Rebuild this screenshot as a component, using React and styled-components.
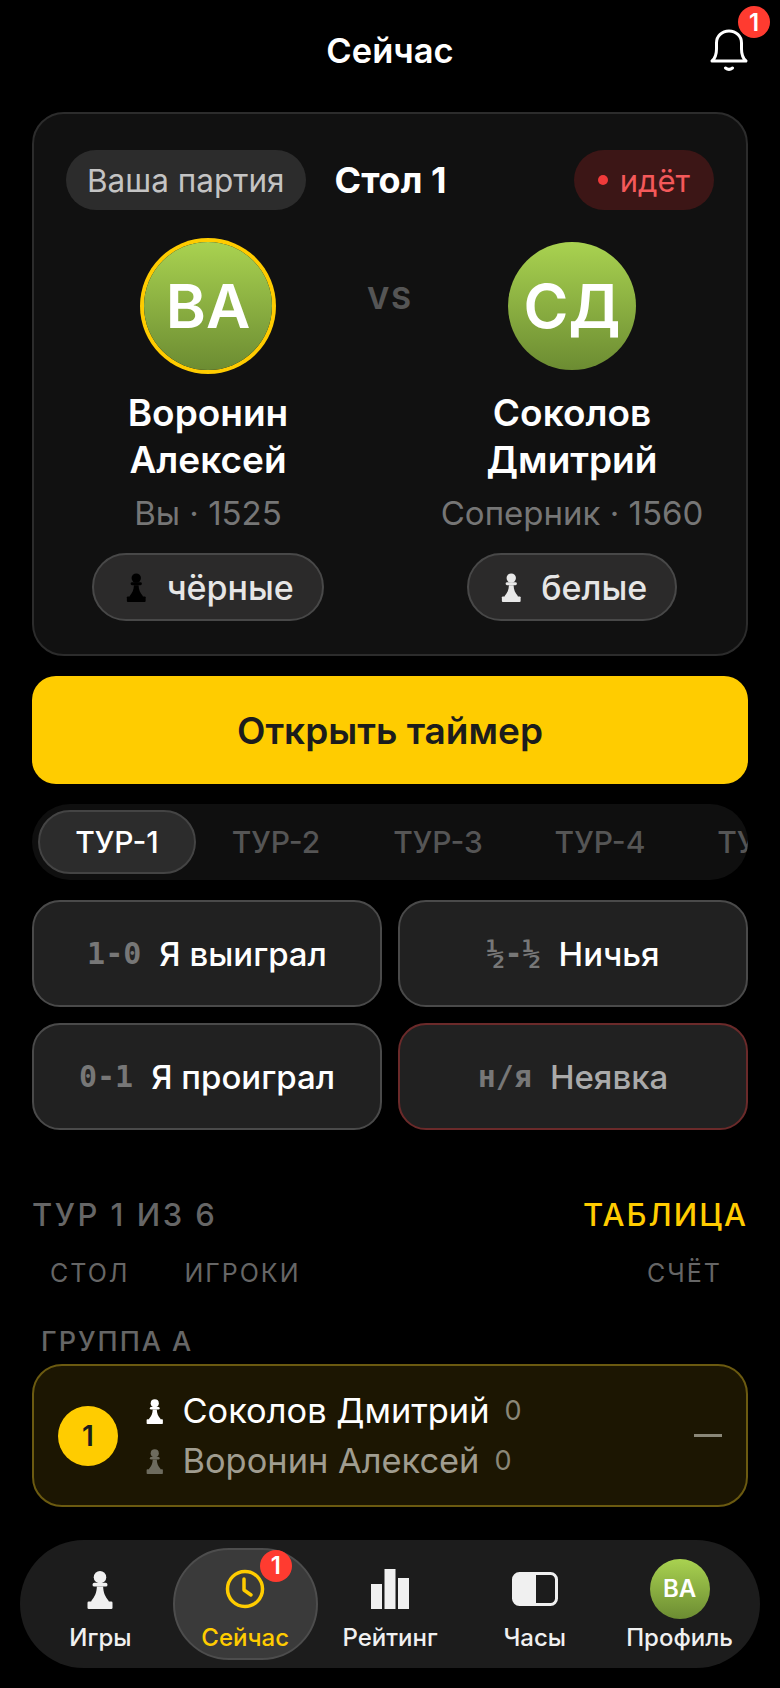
import styled, { createGlobalStyle } from 'styled-components'

const GlobalStyle = createGlobalStyle`
    html, body {
        margin: 0;
        padding: 0;
        background: #000;
    }
    * {
        box-sizing: border-box;
    }
`

const S = {}

S.Page = styled.div`
    width: 780px;
    height: 1688px;
    background: #000;
    color: #fff;
    font-family: Inter, "Noto Sans", sans-serif;
    display: flex;
    flex-direction: column;
    overflow: hidden;
`
S.Header = styled.header`
    height: 112px;
    flex: none;
    position: relative;
    display: flex;
    justify-content: center;
    padding-top: 29px;
`
S.Title = styled.h1`
    margin: 0;
    font-size: 34.5px;
    line-height: 44px;
    font-weight: 600;
`
S.Bell = styled.div`
    position: absolute;
    left: 708px;
    top: 28px;
    width: 42px;
    height: 44px;
`
S.Badge = styled.span`
    position: absolute;
    width: ${p => p.$size}px;
    height: ${p => p.$size}px;
    left: ${p => p.$left}px;
    top: ${p => p.$top}px;
    border-radius: 50%;
    background: #ff3b30;
    color: #fff;
    font-size: ${p => p.$font}px;
    font-weight: 600;
    display: flex;
    align-items: center;
    justify-content: center;
`
S.Main = styled.main`
    padding: 0 32px;
    display: flex;
    flex-direction: column;
`
S.Card = styled.section`
    height: 544px;
    background: #111;
    border: 2px solid #2c2c2c;
    border-radius: 32px;
    padding: 36px 32px 0;
`
S.CardTop = styled.div`
    display: flex;
    align-items: center;
    gap: 29px;
`
S.Tag = styled.span`
    height: 60px;
    border-radius: 30px;
    background: #2c2c2c;
    color: #c4c4c4;
    font-size: 31.5px;
    display: flex;
    align-items: center;
    padding: 0 21px;
`
S.TableName = styled.span`
    font-size: 36px;
    font-weight: 700;
    margin-right: auto;
`
S.Status = styled.span`
    height: 60px;
    border-radius: 30px;
    background: #3c1616;
    color: #f4595a;
    font-size: 31px;
    display: flex;
    align-items: center;
    gap: 12px;
    padding: 0 24px;
`
S.Dot = styled.i`
    width: 10px;
    height: 10px;
    border-radius: 50%;
    background: #f03a3a;
`
S.Players = styled.div`
    display: grid;
    grid-template-columns: 1fr 64px 1fr;
    margin: 28px -8px 0;
`
S.Player = styled.div`
    display: flex;
    flex-direction: column;
    align-items: center;
`
S.Avatar = styled.div`
    width: 128px;
    height: 128px;
    border-radius: 50%;
    background: linear-gradient(180deg, #a9d250 0%, #6c8c32 100%);
    display: flex;
    align-items: center;
    justify-content: center;
    font-size: 61px;
    font-weight: 600;
    margin-top: 4px;
    box-shadow: ${p => (p.$me ? '0 0 0 4px #ffcc00' : 'none')};
`
S.Name = styled.div`
    margin-top: 19px;
    font-size: 37px;
    line-height: 47px;
    font-weight: 600;
    text-align: center;
`
S.Meta = styled.div`
    margin-top: 8px;
    font-size: 33px;
    line-height: 44px;
    color: #767676;
    white-space: nowrap;
`
S.Chip = styled.div`
    margin-top: 18px;
    height: 68px;
    border-radius: 34px;
    border: 2px solid #484848;
    background: #2b2a2a;
    color: #e6e6e6;
    font-size: 34px;
    font-weight: 500;
    display: flex;
    align-items: center;
    gap: 19px;
    padding: 0 28px 0 31px;
`
S.Versus = styled.div`
    text-align: center;
    margin-top: 42px;
    font-size: 30px;
    font-weight: 700;
    letter-spacing: 2px;
    color: #555;
`
S.OpenButton = styled.button`
    margin-top: 20px;
    height: 108px;
    border: 0;
    border-radius: 24px;
    background: #ffcc00;
    color: #1c1c1c;
    font-family: inherit;
    font-size: 37px;
    font-weight: 600;
`
S.Tabs = styled.div`
    margin-top: 20px;
    height: 76px;
    border-radius: 38px;
    background: #0f0f0f;
    padding: 6px;
    display: flex;
    gap: 4px;
    overflow: hidden;
`
S.Tab = styled.div`
    flex: none;
    width: 158px;
    height: 64px;
    border-radius: 32px;
    display: flex;
    align-items: center;
    justify-content: center;
    font-size: 30px;
    font-weight: 500;
    margin-right: ${p => (p.$active ? '-3px' : '0')};
    color: ${p => (p.$active ? '#fff' : '#555')};
    background: ${p => (p.$active ? '#2c2c2c' : 'transparent')};
    border: 2px solid ${p => (p.$active ? '#444' : 'transparent')};
`
S.Results = styled.div`
    margin-top: 20px;
    display: grid;
    grid-template-columns: 1fr 1fr;
    gap: 16px;
`
S.Result = styled.button`
    height: 107px;
    border-radius: 28px;
    border: 2px solid ${p => (p.$danger ? '#6b2a2a' : '#4a4a4a')};
    background: #212121;
    color: ${p => (p.$danger ? '#aaa' : '#fff')};
    font-family: inherit;
    font-size: 33px;
    font-weight: 500;
    display: flex;
    align-items: center;
    justify-content: center;
    gap: 18px;
`
S.Code = styled.span`
    font-family: "DejaVu Sans Mono", monospace;
    font-size: 30px;
    font-weight: 700;
    color: #777;
`
S.RoundRow = styled.div`
    margin-top: 66px;
    display: flex;
    justify-content: space-between;
    font-size: 31px;
    letter-spacing: 2.5px;
    line-height: 38px;
    font-weight: 500;
    color: #666;
`
S.TableLink = styled.span`
    color: #ffcc00;
    letter-spacing: 2px;
`
S.Columns = styled.div`
    margin-top: 22px;
    display: flex;
    padding: 0 26px 0 18px;
    font-size: 25px;
    line-height: 34px;
    letter-spacing: 2px;
    color: #666;
`
S.ColPlayers = styled.span`
    margin-left: 55px;
    margin-right: auto;
`
S.Group = styled.div`
    margin-top: 35px;
    padding-left: 9px;
    font-size: 27px;
    line-height: 34px;
    letter-spacing: 2px;
    font-weight: 500;
    color: #666;
`
S.Match = styled.div`
    margin-top: 5px;
    height: 143px;
    border-radius: 30px;
    border: 2px solid #6b5a10;
    background: #1c1602;
    display: flex;
    align-items: center;
    padding: 0 24px;
`
S.Num = styled.div`
    width: 60px;
    height: 60px;
    border-radius: 50%;
    background: #ffcc00;
    color: #1c1c1c;
    font-size: 28px;
    font-weight: 600;
    display: flex;
    align-items: center;
    justify-content: center;
`
S.Lines = styled.div`
    margin-left: 27px;
    display: flex;
    flex-direction: column;
`
S.Line = styled.div`
    display: flex;
    align-items: center;
    gap: 18px;
    height: 50px;
    font-size: 34.4px;
    color: ${p => (p.$dim ? '#a09d90' : '#fff')};
`
S.Pts = styled.span`
    margin-left: -3px;
    font-size: 27px;
    color: #8a8778;
`
S.Dash = styled.i`
    margin-left: auto;
    width: 28px;
    height: 3px;
    background: #8a8778;
`
S.Nav = styled.nav`
    margin: auto 20px 20px;
    height: 128px;
    border-radius: 64px;
    background: #1c1c1c;
    padding: 8px 8px;
    display: grid;
    grid-template-columns: repeat(5, 1fr);
    flex: none;
`
S.NavItem = styled.div`
    position: relative;
    display: flex;
    flex-direction: column;
    align-items: center;
    padding-top: ${p => (p.$active ? '9px' : '11px')};
    font-size: 24px;
    line-height: 32px;
    font-weight: 500;
    border-radius: 56px;
    color: ${p => (p.$active ? '#ffcc00' : '#f0f0f0')};
    background: ${p => (p.$active ? '#3a3a3a' : 'transparent')};
    border: ${p => (p.$active ? '2px solid #4d4d4d' : '0')};
`
S.NavIcon = styled.div`
    height: 60px;
    margin-bottom: 3px;
    display: flex;
    align-items: center;
    justify-content: center;
`
S.NavAvatar = styled.div`
    width: 60px;
    height: 60px;
    border-radius: 50%;
    background: linear-gradient(180deg, #a9d250 0%, #6c8c32 100%);
    display: flex;
    align-items: center;
    justify-content: center;
    font-size: 24px;
    font-weight: 600;
    color: #fff;
`

const Pawn = ({ size = 24, color = '#fff' }) => (
    <svg width={size * 0.75} height={size} viewBox="0 0 24 32" fill={color}>
        <circle cx="12" cy="6.500" r="5" />
        <rect x="6" y="11" width="12" height="3" rx="1.500" />
        <path d="M9.500 14h5c.2 5 1.600 8 4.500 11.500V27H5v-1.500C7.900 22 9.300 19 9.500 14z" />
        <rect x="2" y="26" width="20" height="6" rx="1" />
    </svg>
)

const BellIcon = () => (
    <svg width="42" height="44" viewBox="0 0 42 44" fill="none" stroke="#fff" strokeWidth="3" strokeLinejoin="round" strokeLinecap="round">
        <path d="M4 33c3.500-3 4.500-7 4.500-12V15c0-7 5.500-12 12.500-12s12.500 5 12.500 12v6c0 5 1 9 4.500 12z" />
        <path d="M17.500 40c2 1.600 5 1.600 7 0" />
    </svg>
)

const ClockIcon = () => (
    <svg width="40" height="40" viewBox="0 0 40 40" fill="none" stroke="#ffcc00" strokeWidth="3.500" strokeLinecap="round" strokeLinejoin="round">
        <circle cx="20" cy="20" r="17.500" />
        <path d="M19 10v11l7 5" />
    </svg>
)

const BarsIcon = () => (
    <svg width="40" height="40" viewBox="0 0 40 40" fill="#f0f0f0">
        <rect x="1" y="15" width="11" height="25" />
        <rect x="14.500" y="0" width="11" height="40" />
        <rect x="28" y="9" width="11" height="31" />
    </svg>
)

const TimerIcon = () => (
    <svg width="46" height="34" viewBox="0 0 46 34">
        <rect x="1.500" y="1.500" width="43" height="31" rx="6" fill="none" stroke="#f0f0f0" strokeWidth="3" />
        <path d="M7 1.500h17v31H7a5.500 5.500 0 0 1-5.500-5.500V7A5.500 5.500 0 0 1 7 1.500z" fill="#f0f0f0" />
    </svg>
)

const rounds = ['ТУР-1', 'ТУР-2', 'ТУР-3', 'ТУР-4', 'ТУР-5']

const App = () => {
    return (
        <S.Page>
            <GlobalStyle />
            <S.Header>
                <S.Title>Сейчас</S.Title>
                <S.Bell>
                    <BellIcon />
                    <S.Badge $size={32} $left={30} $top={-22} $font={24}>1</S.Badge>
                </S.Bell>
            </S.Header>

            <S.Main>
                <S.Card>
                    <S.CardTop>
                        <S.Tag>Ваша партия</S.Tag>
                        <S.TableName>Стол 1</S.TableName>
                        <S.Status><S.Dot />идёт</S.Status>
                    </S.CardTop>
                    <S.Players>
                        <S.Player>
                            <S.Avatar $me>ВА</S.Avatar>
                            <S.Name>Воронин<br />Алексей</S.Name>
                            <S.Meta>Вы · 1525</S.Meta>
                            <S.Chip><Pawn size={30} color="#000" />чёрные</S.Chip>
                        </S.Player>
                        <S.Versus>VS</S.Versus>
                        <S.Player>
                            <S.Avatar>СД</S.Avatar>
                            <S.Name>Соколов<br />Дмитрий</S.Name>
                            <S.Meta>Соперник · 1560</S.Meta>
                            <S.Chip><Pawn size={30} color="#e8e8e8" />белые</S.Chip>
                        </S.Player>
                    </S.Players>
                </S.Card>

                <S.OpenButton>Открыть таймер</S.OpenButton>

                <S.Tabs>
                    {rounds.map((r, i) => (
                        <S.Tab key={r} $active={i === 0}>{r}</S.Tab>
                    ))}
                </S.Tabs>

                <S.Results>
                    <S.Result><S.Code>1-0</S.Code>Я выиграл</S.Result>
                    <S.Result><S.Code>½-½</S.Code>Ничья</S.Result>
                    <S.Result><S.Code>0-1</S.Code>Я проиграл</S.Result>
                    <S.Result $danger><S.Code>н/я</S.Code>Неявка</S.Result>
                </S.Results>

                <S.RoundRow>
                    <span>ТУР 1 ИЗ 6</span>
                    <S.TableLink>ТАБЛИЦА</S.TableLink>
                </S.RoundRow>
                <S.Columns>
                    <span>СТОЛ</span>
                    <S.ColPlayers>ИГРОКИ</S.ColPlayers>
                    <span>СЧЁТ</span>
                </S.Columns>
                <S.Group>ГРУППА А</S.Group>
                <S.Match>
                    <S.Num>1</S.Num>
                    <S.Lines>
                        <S.Line>
                            <Pawn size={26} color="#fff" />Соколов Дмитрий<S.Pts>0</S.Pts>
                        </S.Line>
                        <S.Line $dim>
                            <Pawn size={26} color="#6d6b5e" />Воронин Алексей<S.Pts>0</S.Pts>
                        </S.Line>
                    </S.Lines>
                    <S.Dash />
                </S.Match>
            </S.Main>

            <S.Nav>
                <S.NavItem>
                    <S.NavIcon><Pawn size={40} color="#f0f0f0" /></S.NavIcon>
                    Игры
                </S.NavItem>
                <S.NavItem $active>
                    <S.NavIcon><ClockIcon /></S.NavIcon>
                    Сейчас
                    <S.Badge $size={32} $left={85} $top={0} $font={24}>1</S.Badge>
                </S.NavItem>
                <S.NavItem>
                    <S.NavIcon><BarsIcon /></S.NavIcon>
                    Рейтинг
                </S.NavItem>
                <S.NavItem>
                    <S.NavIcon><TimerIcon /></S.NavIcon>
                    Часы
                </S.NavItem>
                <S.NavItem>
                    <S.NavIcon><S.NavAvatar>ВА</S.NavAvatar></S.NavIcon>
                    Профиль
                </S.NavItem>
            </S.Nav>
        </S.Page>
    )
}

export default App
